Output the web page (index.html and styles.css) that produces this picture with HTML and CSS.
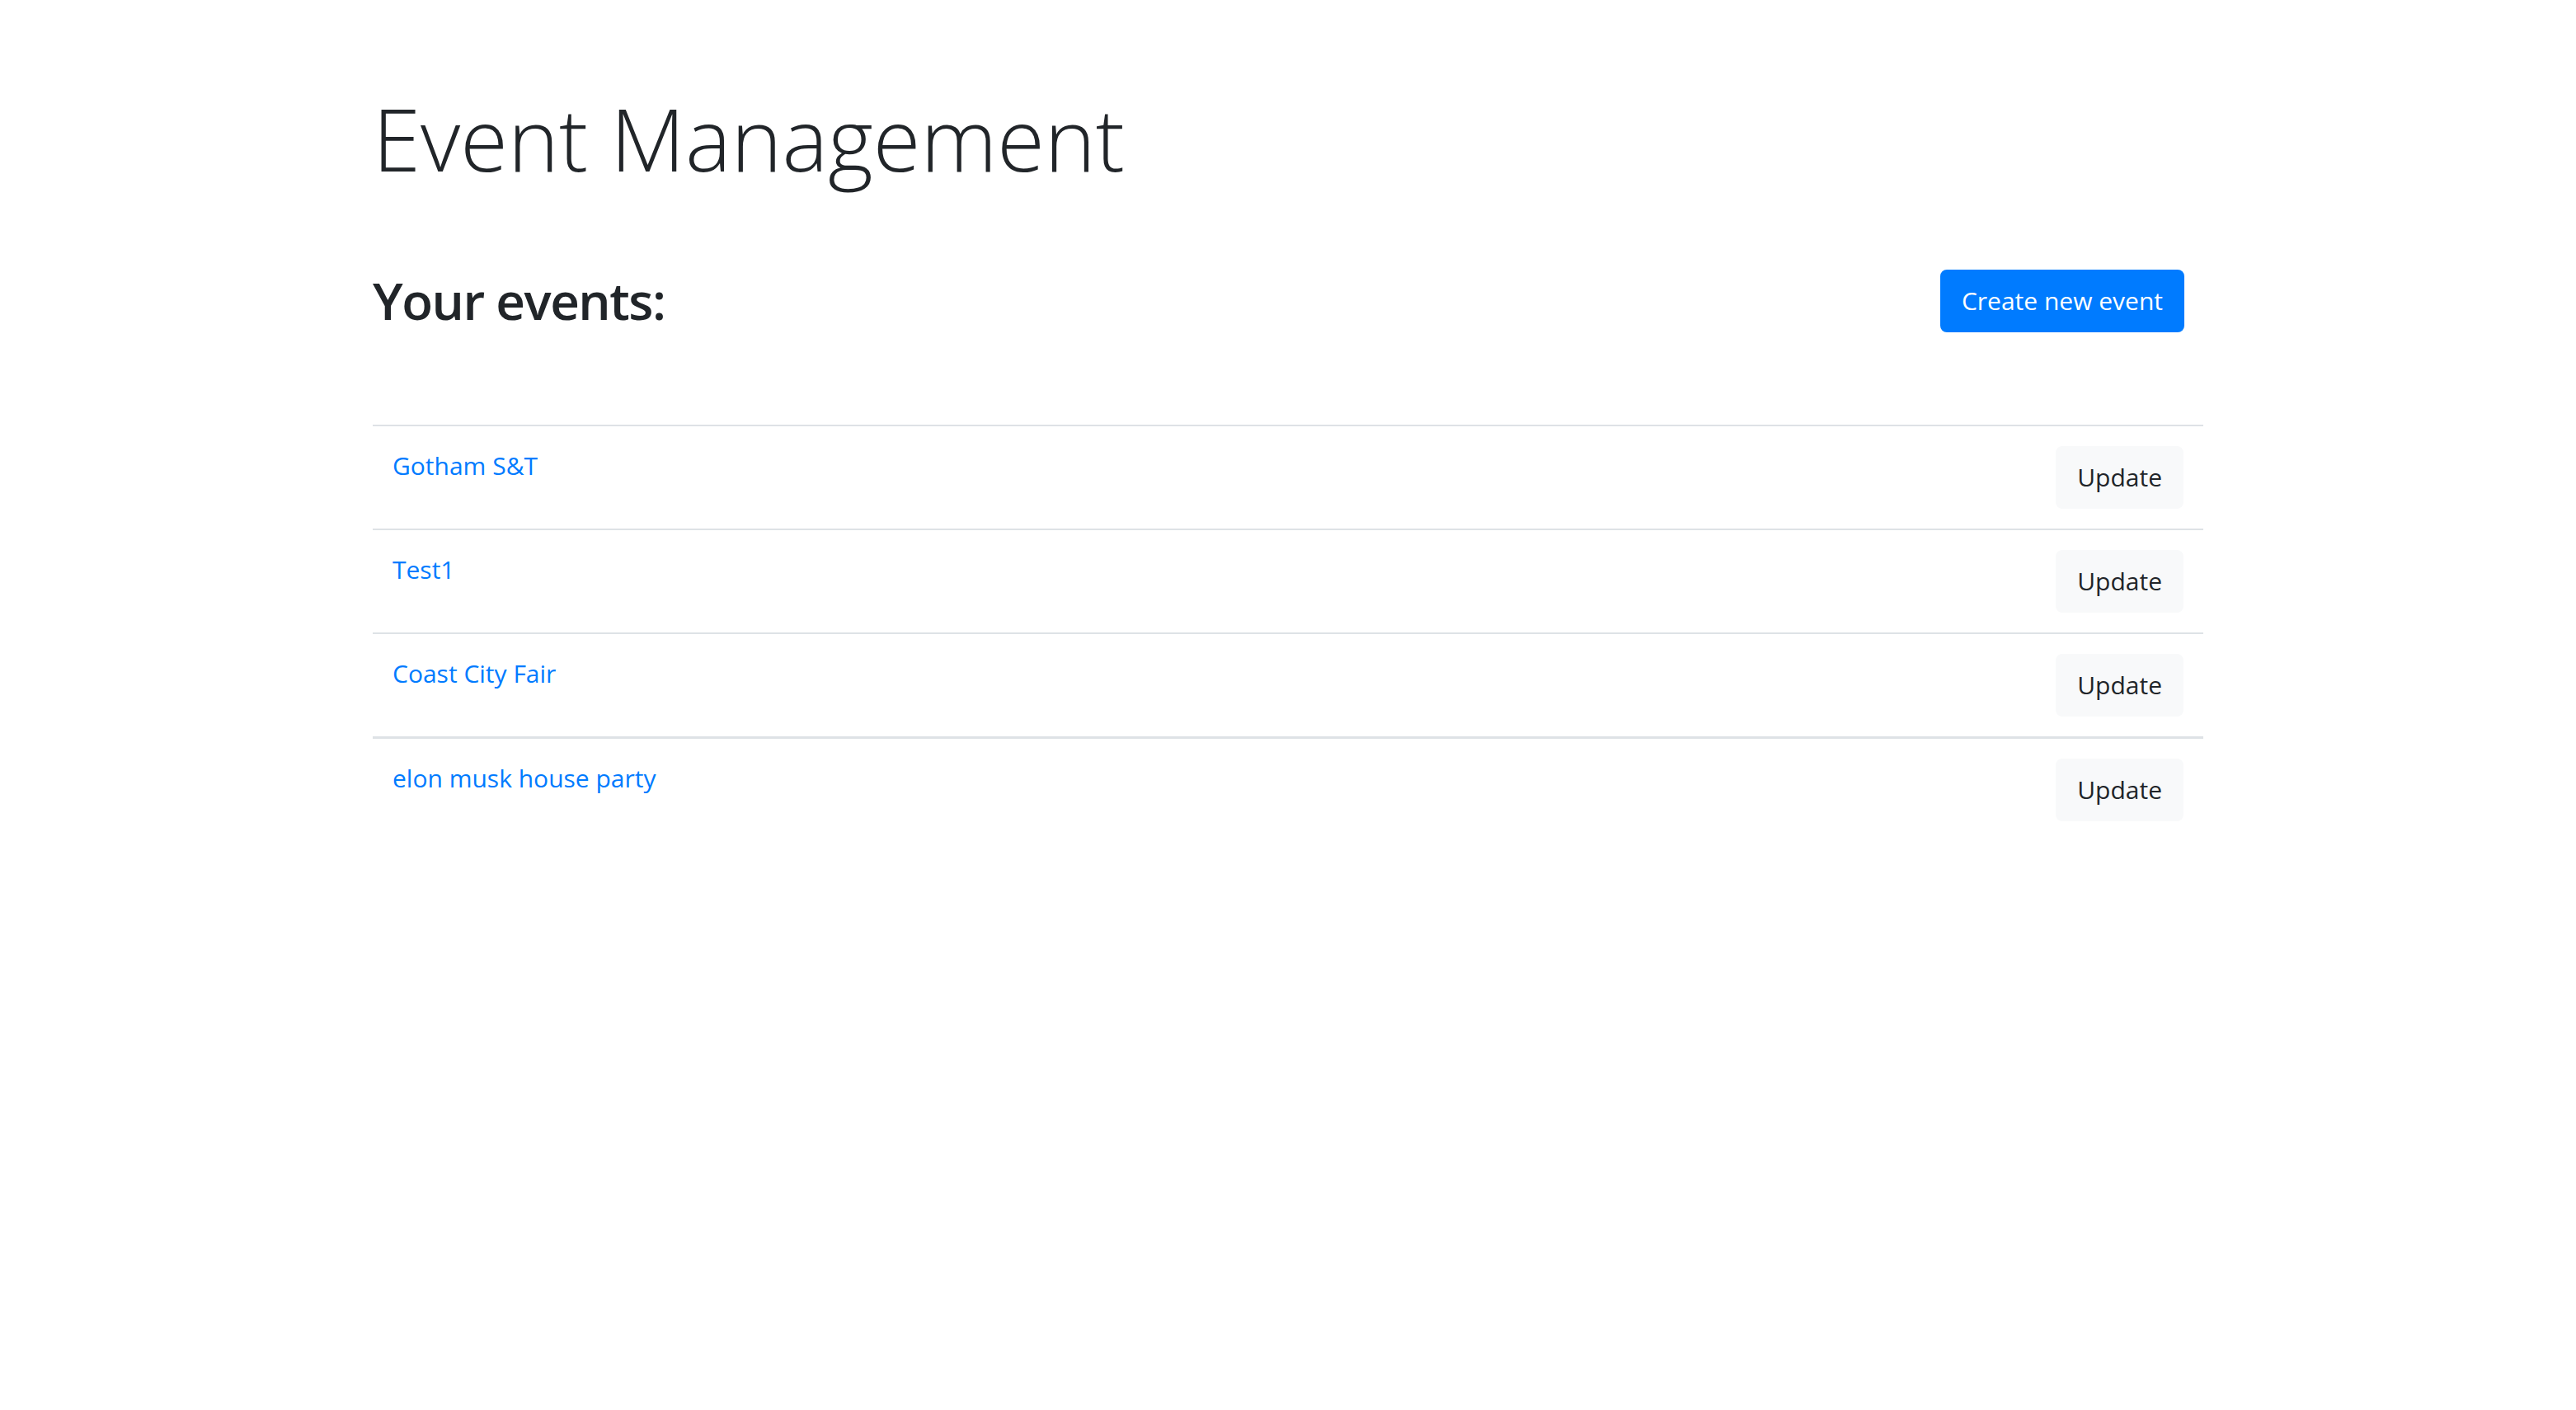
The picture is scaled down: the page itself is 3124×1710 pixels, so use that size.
FILE: index.html
```html
<!DOCTYPE html>
<html lang="en">
<head>
<meta charset="utf-8">
<title>Event Management</title>
<link rel="stylesheet" href="styles.css">
</head>
<body>
<div class="container">
  <h1 class="page-title">Event Management</h1>
  <div class="header-row">
    <h2 class="section-title">Your events:</h2>
    <button class="btn btn-primary" type="button">Create new event</button>
  </div>
  <table class="events">
    <tbody>
      <tr>
        <td class="event-name"><a href="#">Gotham S&amp;T</a></td>
        <td class="event-action"><button class="btn btn-light" type="button">Update</button></td>
      </tr>
      <tr>
        <td class="event-name"><a href="#">Test1</a></td>
        <td class="event-action"><button class="btn btn-light" type="button">Update</button></td>
      </tr>
      <tr>
        <td class="event-name"><a href="#">Coast City Fair</a></td>
        <td class="event-action"><button class="btn btn-light" type="button">Update</button></td>
      </tr>
      <tr class="last-row">
        <td class="event-name"><a href="#">elon musk house party</a></td>
        <td class="event-action"><button class="btn btn-light" type="button">Update</button></td>
      </tr>
    </tbody>
  </table>
</div>
</body>
</html>
```

FILE: styles.css
```css
html, body {
  margin: 0;
  padding: 0;
  background: #ffffff;
}

body {
  font-family: "Open Sans", "Noto Sans", "Liberation Sans", sans-serif;
  font-size: 30px;
  line-height: 48px;
  color: #212529;
}

.container {
  width: 2220px;
  margin: 0 auto;
}

.page-title {
  margin: 105px 0 95px;
  font-size: 105px;
  font-weight: 300;
  line-height: 126px;
}

.header-row {
  display: flex;
  justify-content: space-between;
  align-items: center;
  padding-right: 23px;
}

.section-title {
  margin: 0;
  font-size: 62px;
  font-weight: 600;
  line-height: 77px;
  letter-spacing: -1.5px;
}

.btn {
  font-family: inherit;
  font-size: 30px;
  line-height: 48px;
  padding: 12px 24px;
  border: 2px solid transparent;
  border-radius: 8px;
  cursor: pointer;
}

.btn-primary {
  background: #007bff;
  border-color: #007bff;
  color: #ffffff;
}

.btn-light {
  background: #f8f9fa;
  border-color: #f8f9fa;
  color: #212529;
}

.events {
  width: 100%;
  margin-top: 112px;
  border-collapse: collapse;
}

.events td {
  padding: 24px;
  border-top: 2px solid #dee2e6;
  vertical-align: top;
}

.events .last-row td {
  border-top-width: 3px;
}

.event-action {
  text-align: right;
}

.event-name a {
  color: #007bff;
  text-decoration: none;
}
```
